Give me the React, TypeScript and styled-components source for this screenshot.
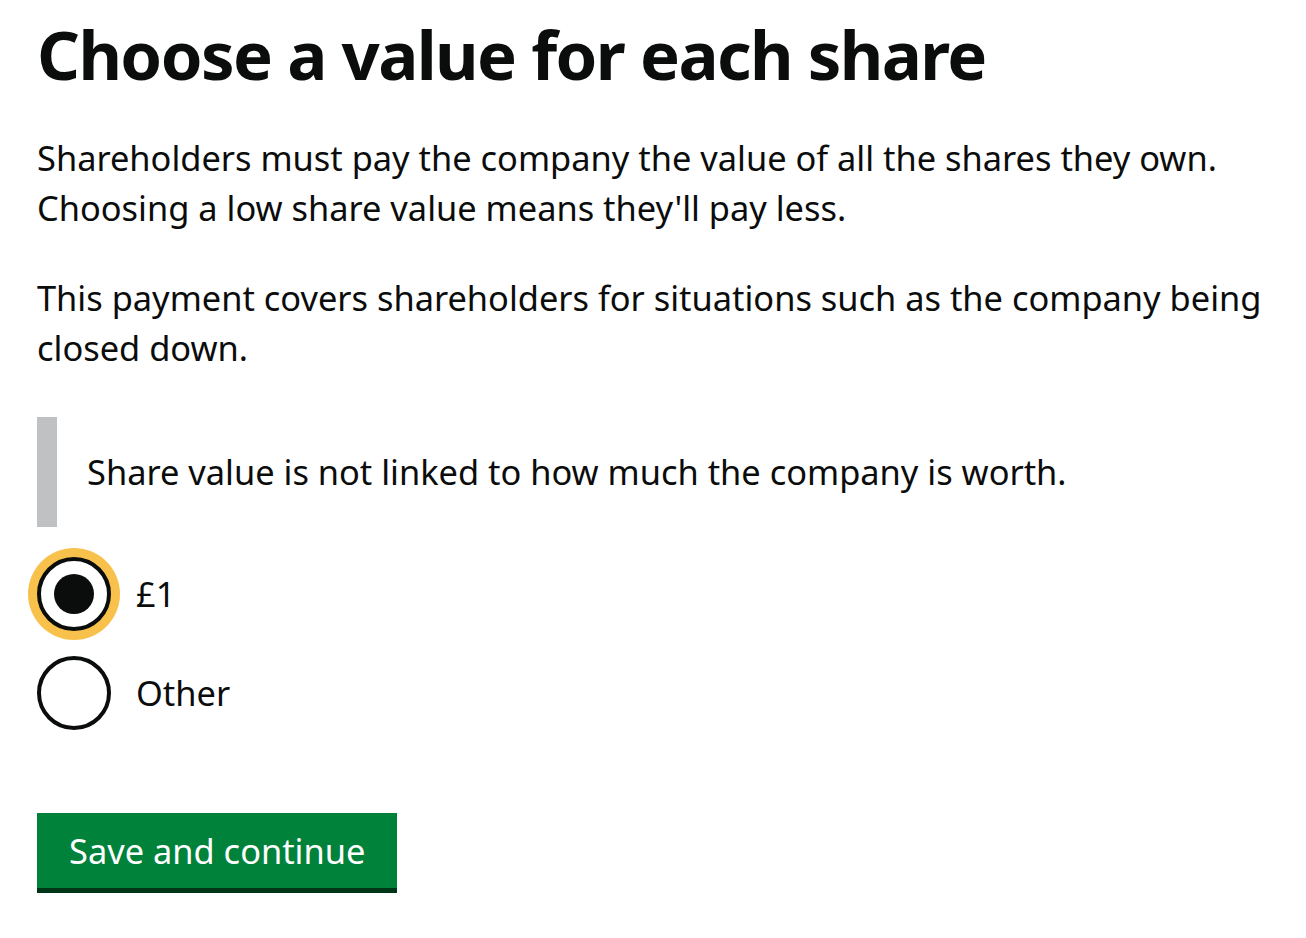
import React, { useState } from 'react'
import styled, { createGlobalStyle } from 'styled-components'

const GlobalStyle = createGlobalStyle`
	html, body {
		margin: 0;
		padding: 0;
		background: #ffffff;
	}
	body {
		font-family: 'Noto Sans', 'Open Sans', sans-serif;
		color: #0b0c0c;
		-webkit-font-smoothing: antialiased;
	}
`

const Page = styled.main`
	padding: 14px 37px 40px;
	max-width: 1238px;
`

const Heading = styled.h1`
	margin: 0 0 39px;
	font-family: 'Noto Sans', sans-serif;
	font-weight: 700;
	font-size: 67px;
	line-height: 80px;
	letter-spacing: -1.6px;
	color: #0b0c0c;
`

const Body = styled.p`
	margin: 0 0 40px;
	font-size: 34.4px;
	line-height: 50px;
	color: #0b0c0c;
`

const Inset = styled.div`
	margin: 44px 0 30px;
	padding: 30px 0 30px 30px;
	border-left: 20px solid #bfc1c3;
	font-size: 34.4px;
	line-height: 50px;
`

const RadioGroup = styled.fieldset`
	margin: 0 0 83px;
	padding: 0;
	border: 0;
	display: flex;
	flex-direction: column;
	gap: 25px;
`

const RadioItem = styled.label`
	display: flex;
	align-items: center;
	gap: 25px;
	cursor: pointer;
	font-size: 34.4px;
	line-height: 50px;
`

const Circle = styled.span<{ $focused: boolean }>`
	position: relative;
	flex: none;
	width: 74px;
	height: 74px;
	box-sizing: border-box;
	border: 4px solid #0b0c0c;
	border-radius: 50%;
	background: #ffffff;
	box-shadow: ${p => (p.$focused ? '0 0 0 9px #f8c14b' : 'none')};
`

const Dot = styled.span`
	position: absolute;
	left: 50%;
	top: 50%;
	width: 40px;
	height: 40px;
	margin: -20px 0 0 -20px;
	border-radius: 50%;
	background: #0b0c0c;
`

const HiddenInput = styled.input`
	position: absolute;
	opacity: 0;
	width: 0;
	height: 0;
	margin: 0;
`

const Button = styled.button`
	display: inline-block;
	margin: 0;
	padding: 13px 32px 12px;
	border: 0;
	border-radius: 0;
	background: #00823b;
	box-shadow: 0 5px 0 #003618;
	color: #ffffff;
	font-family: 'Noto Sans', sans-serif;
	font-size: 34.4px;
	line-height: 50px;
	cursor: pointer;
`

const options = ['£1', 'Other']

export default function App() {
	const [value, setValue] = useState('£1')

	return (
		<>
			<GlobalStyle />
			<Page>
				<Heading>Choose a value for each share</Heading>
				<Body>
					Shareholders must pay the company the value of all the shares they own. Choosing a low share value means they'll pay less.
				</Body>
				<Body>
					This payment covers shareholders for situations such as the company being closed down.
				</Body>
				<Inset>Share value is not linked to how much the company is worth.</Inset>
				<RadioGroup>
					{options.map(option => (
						<RadioItem key={option}>
							<HiddenInput
								type="radio"
								name="share-value"
								checked={value === option}
								onChange={() => setValue(option)}
							/>
							<Circle $focused={value === option && option === '£1'}>
								{value === option && <Dot />}
							</Circle>
							{option}
						</RadioItem>
					))}
				</RadioGroup>
				<Button type="button">Save and continue</Button>
			</Page>
		</>
	)
}
